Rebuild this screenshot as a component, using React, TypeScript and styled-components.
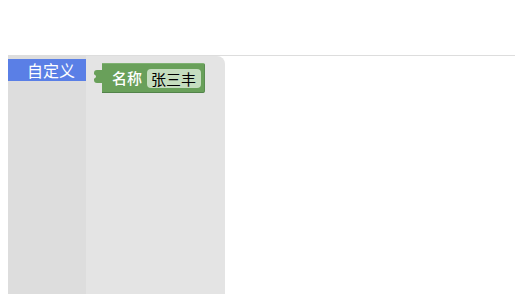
import React from "react";
import styled, { createGlobalStyle } from "styled-components";

const GlobalStyle = createGlobalStyle`
  html, body { height: 100%; }
  body {
    margin: 8px 0 0 8px;
    overflow: hidden;
    background: #ffffff;
    font-family: "Noto Sans CJK SC", "Noto Sans", sans-serif;
  }
`;

const Header = styled.div`
  height: 47px;
`;

const Workspace = styled.div`
  display: flex;
  height: calc(100vh - 55px);
  border-top: 1px solid #dddddd;
  background: #ffffff;
`;

const Toolbox = styled.div`
  width: 78px;
  background: #dddddd;
  padding-top: 3px;
  display: flex;
  flex-direction: column;
`;

const Category = styled.div<{ $selected?: boolean }>`
  height: 22px;
  display: flex;
  align-items: center;
  justify-content: flex-end;
  padding-right: 11px;
  background: ${(p) => (p.$selected ? "#5a7fe6" : "transparent")};
  color: ${(p) => (p.$selected ? "#ffffff" : "#000000")};
  font-size: 16px;
  line-height: 22px;
`;

const Flyout = styled.div`
  width: 139px;
  background: #e4e4e4;
  border-top-right-radius: 8px;
  padding: 7px 0 0 8px;
  box-sizing: border-box;
`;

const Block = styled.div`
  display: flex;
  align-items: flex-start;
`;

const Tab = styled.svg`
  display: block;
  margin-top: 7px;
`;

const BlockBody = styled.div<{ $color: string }>`
  display: flex;
  align-items: center;
  gap: 5px;
  height: 30px;
  box-sizing: border-box;
  padding: 0 3px 0 10px;
  background: ${(p) => p.$color};
  border-bottom: 1px solid #52834a;
  border-right: 1px solid #5a8d51;
  border-top: 1px solid #7fb272;
  border-radius: 0 2px 2px 0;
`;

const Label = styled.span`
  color: #ffffff;
  font-size: 15px;
  font-weight: 500;
  line-height: 20px;
`;

const Field = styled.span`
  display: inline-flex;
  align-items: center;
  height: 19px;
  padding: 0 5px 0 4px;
  background: #c5ddbf;
  border-radius: 4px;
  color: #000000;
  font-size: 15px;
  line-height: 19px;
`;

const Canvas = styled.div`
  flex: 1;
`;

export default function App() {
  const green = "#69a05a";
  return (
    <>
      <GlobalStyle />
      <Header />
      <Workspace>
        <Toolbox>
          <Category $selected>自定义</Category>
        </Toolbox>
        <Flyout>
          <Block>
            <Tab width="8" height="13" viewBox="0 0 8 13">
              <path
                d="M8 0 L8 13 L3 13 C1 13 0 12 0 10 L0 9 C0 8 2 8 2 6.5 C2 5 0 5 0 4 L0 3 C0 1 1 0 3 0 Z"
                fill={green}
              />
            </Tab>
            <BlockBody $color={green}>
              <Label>名称</Label>
              <Field>张三丰</Field>
            </BlockBody>
          </Block>
        </Flyout>
        <Canvas />
      </Workspace>
    </>
  );
}
